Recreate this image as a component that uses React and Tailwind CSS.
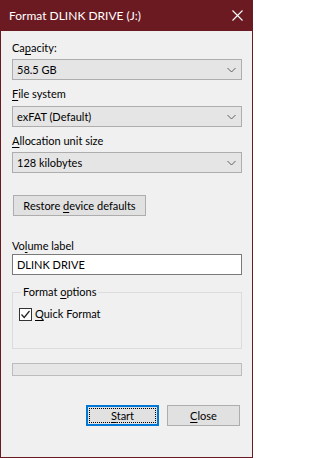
import React from "react";

function U({ children }) {
  return <span className="underline underline-offset-2">{children}</span>;
}

function Combo({ value }) {
  return (
    <div className="flex items-center justify-between h-[21px] bg-[#e5e5e5] border border-[#adadad] pl-[4px] pr-[4px]">
      <span>{value}</span>
      <svg width="9" height="6" viewBox="0 0 9 6" className="mr-[1px]">
        <path d="M0.5 1 L4.5 5 L8.5 1" fill="none" stroke="#606060" strokeWidth="1" />
      </svg>
    </div>
  );
}

function Button({ children, focused }) {
  return (
    <button
      className={
        focused
          ? "w-[73px] h-[21px] bg-[#e1e1e1] border-2 border-[#0078d7] outline-1 outline-dotted outline-black -outline-offset-4"
          : "w-[73px] h-[21px] bg-[#e1e1e1] border border-[#adadad]"
      }
    >
      {children}
    </button>
  );
}

export default function App() {
  return (
    <div
      className="w-[253px] h-[458px] flex flex-col bg-[#f0f0f0] border border-t-0 border-[#6b1a22] text-[11px] leading-[16px] text-black"
      style={{ fontFamily: 'Lato, "Noto Sans", sans-serif' }}
    >
      {/* title bar */}
      <div className="h-[31px] -mx-px flex items-center justify-between bg-[#6b1a22] text-white pl-[9px] pr-[10px]">
        <span className="text-[12px]">Format DLINK DRIVE (J:)</span>
        <svg width="11" height="11" viewBox="0 0 11 11">
          <path d="M0.5 0.5 L10.5 10.5 M10.5 0.5 L0.5 10.5" stroke="#fff" strokeWidth="1.1" />
        </svg>
      </div>

      <div className="flex flex-col pl-[11px] pr-[10px]">
        <div className="mt-[9px] h-[16px]">
          Ca<U>p</U>acity:
        </div>
        <div className="mt-[3px]">
          <Combo value="58.5 GB" />
        </div>

        <div className="mt-[6px] h-[16px]">
          <U>F</U>ile system
        </div>
        <div className="mt-[4px]">
          <Combo value="exFAT (Default)" />
        </div>

        <div className="mt-[6px] h-[16px]">
          <U>A</U>llocation unit size
        </div>
        <div className="mt-[3px]">
          <Combo value="128 kilobytes" />
        </div>

        <button className="mt-[22px] ml-px w-[133px] h-[21px] bg-[#e1e1e1] border border-[#adadad]">
          Restore <U>d</U>evice defaults
        </button>

        <div className="mt-[22px] h-[16px]">
          Vo<U>l</U>ume label
        </div>
        <input
          readOnly
          value="DLINK DRIVE"
          className="mt-[0px] h-[21px] bg-white border border-[#7a7a7a] px-[4px] outline-none"
        />

        <fieldset className="mt-[10px] h-[64px] border border-[#dcdcdc] px-[6px] m-0">
          <legend className="ml-[2px] px-[2px] leading-[14px]">
            Format <U>o</U>ptions
          </legend>
          <label className="mt-[7px] flex items-center gap-[3px]">
            <span className="w-[13px] h-[13px] bg-white border border-[#333] flex items-center justify-center">
              <svg width="11" height="11" viewBox="0 0 11 11">
                <path d="M1.5 5.5 L4.2 8.5 L9.5 2" fill="none" stroke="#222" strokeWidth="1.2" />
              </svg>
            </span>
            <span>
              <U>Q</U>uick Format
            </span>
          </label>
        </fieldset>

        <div className="mt-[14px] h-[13px] bg-[#e6e6e6] border border-[#bcbcbc]" />

        <div className="mt-[29px] flex justify-end gap-[8px] pr-[2px]">
          <Button focused>
            <U>S</U>tart
          </Button>
          <Button>
            <U>C</U>lose
          </Button>
        </div>
      </div>
    </div>
  );
}
